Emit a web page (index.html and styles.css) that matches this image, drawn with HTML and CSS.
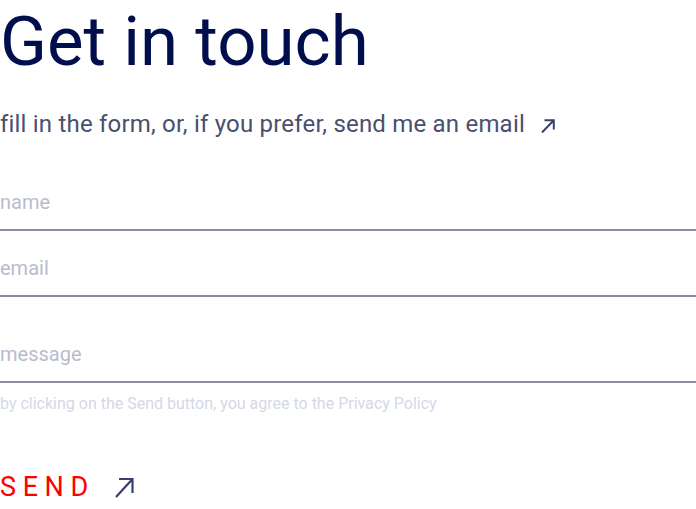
FILE: index.html
```html
<!DOCTYPE html>
<html lang="en">
<head>
<meta charset="utf-8">
<title>Get in touch</title>
<link rel="stylesheet" href="styles.css">
</head>
<body>
<main class="contact">
  <h1 class="title">Get in touch</h1>
  <p class="lead">fill in the form, or, if you prefer, <a class="lead-link" href="#">send me an email<svg class="arrow-sm" viewBox="0 0 14 14" width="14" height="14" aria-hidden="true"><path d="M1 13.5 L12.8 1.2 M3.5 1.2 H12.8 V10.5" fill="none" stroke="currentColor" stroke-width="2"/></svg></a></p>
  <form class="form">
    <label class="field"><input class="input" type="text" placeholder="name"></label>
    <label class="field"><input class="input" type="email" placeholder="email"></label>
    <label class="field field-msg"><input class="input" type="text" placeholder="message"></label>
    <p class="policy">by clicking on the Send button, you agree to the Privacy Policy</p>
    <button class="send" type="button"><span class="send-text">SEND</span><svg class="arrow-lg" viewBox="0 0 19 21" width="19" height="21" aria-hidden="true"><path d="M1 20 L17.5 2 M4 2 H17.5 V16" fill="none" stroke="currentColor" stroke-width="2.2"/></svg></button>
  </form>
</main>
</body>
</html>
```
FILE: styles.css
```css
html, body { margin: 0; padding: 0; background: #fff; }
body { font-family: Roboto, "Liberation Sans", sans-serif; }
.contact { display: flex; flex-direction: column; }
.title {
  margin: 0;
  padding-top: 4px;
  font-size: 69px;
  line-height: 76px;
  font-weight: 400;
  color: #000e4e;
}
.lead {
  margin: 29px 0 0;
  font-size: 24px;
  line-height: 30px;
  letter-spacing: 0.2px;
  color: #4a4f6e;
}
.lead-link { color: inherit; text-decoration: none; }
.arrow-sm { margin-left: 16px; color: #3a3f6b; vertical-align: -1px; }
.form { display: flex; flex-direction: column; margin-top: 50px; }
.field { display: block; border-bottom: 2px solid #878ba8; height: 40px; margin-top: 24px; }
.field:first-child { margin-top: 0; }
.field-msg { height: 40px; padding-top: 44px; margin-top: 0; }
.input {
  display: block; width: 100%; border: 0; outline: 0; padding: 0; margin: 0;
  font-family: inherit; font-size: 20px; line-height: 26px; height: 26px; color: #4a4f6e; background: transparent;
}
.input::placeholder { color: #b9bccd; }
.policy { margin: 11px 0 0; font-size: 16px; line-height: 20px; color: #d5d8e6; }
.send {
  display: flex; align-items: center; gap: 20px; align-self: flex-start;
  margin-top: 57px; padding: 0; border: 0; background: none; cursor: pointer;
}
.send-text { font-family: Roboto, "Liberation Sans", sans-serif; font-size: 27px; line-height: 32px; letter-spacing: 6.6px; color: #ff0000; }
.arrow-lg { color: #3a3f6b; margin-top: 1px; }
```
